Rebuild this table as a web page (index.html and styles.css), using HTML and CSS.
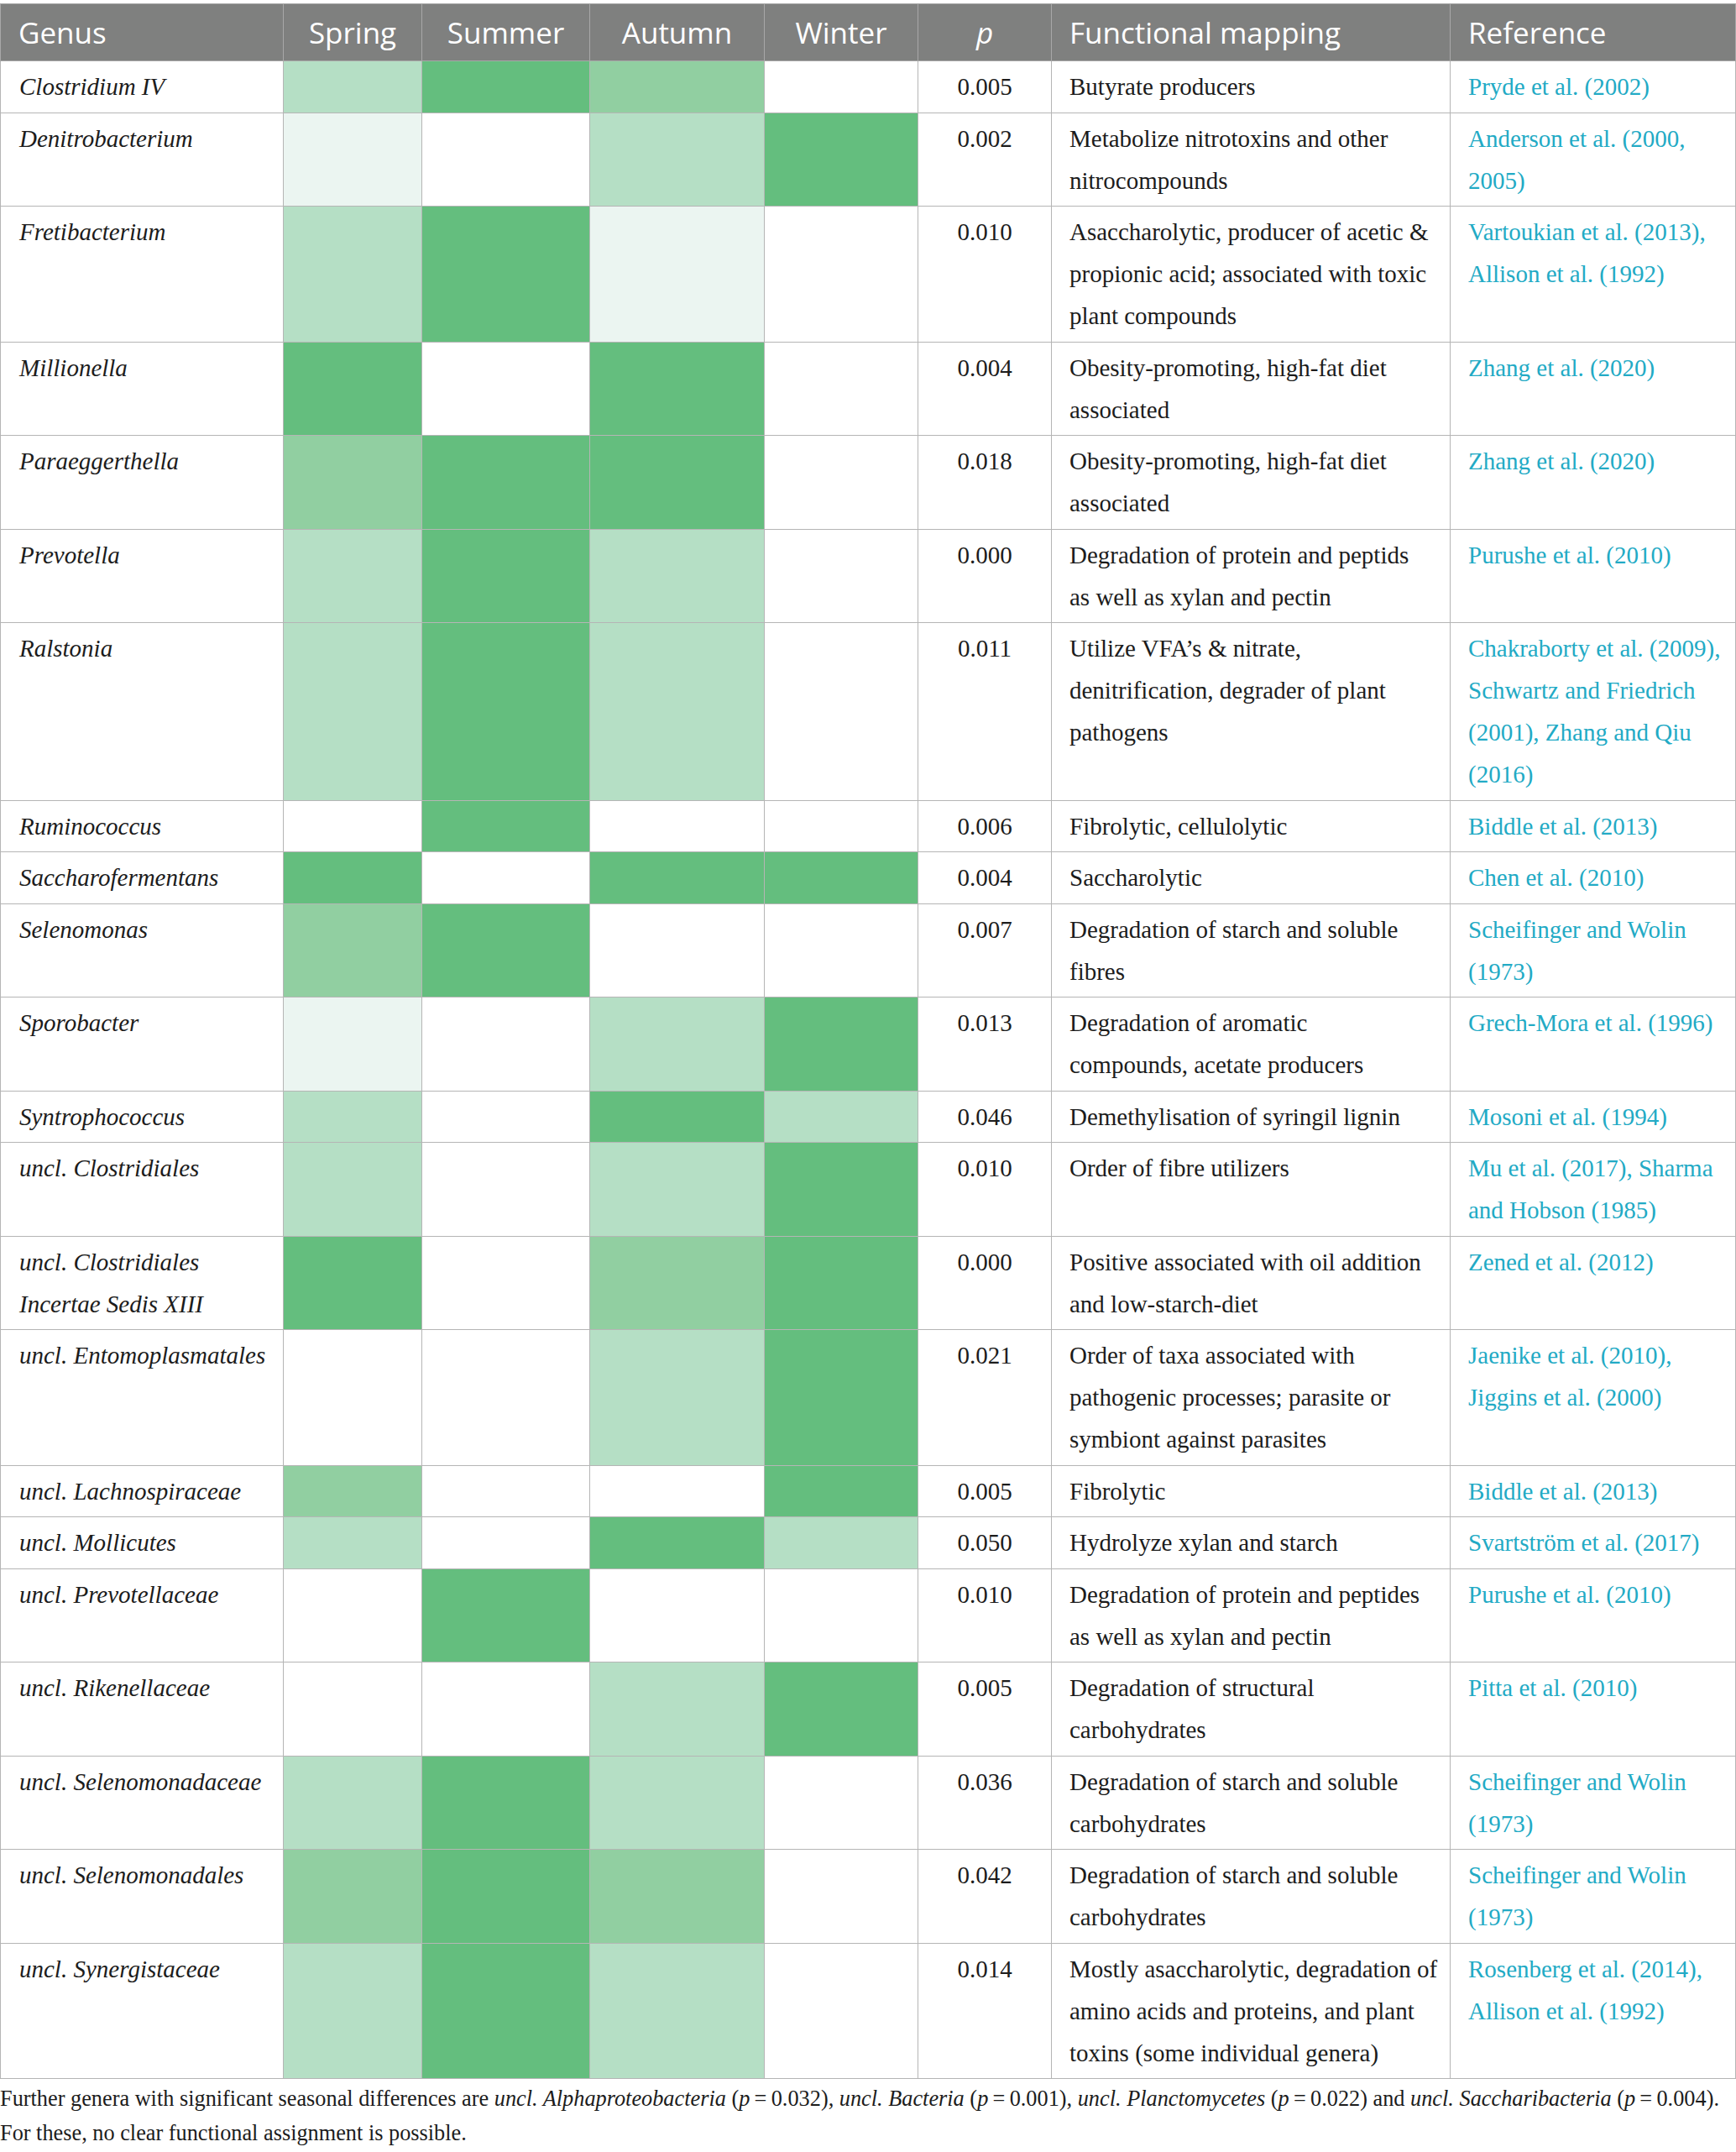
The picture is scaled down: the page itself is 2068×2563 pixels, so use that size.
FILE: index.html
```html
<!DOCTYPE html>
<html lang="en">
<head>
<meta charset="UTF-8">
<meta name="viewport" content="width=device-width, initial-scale=1.0">
<title>Seasonal genera</title>
<link rel="stylesheet" href="styles.css">
</head>
<body>

<div id="table-wrap">
<table id="genus-table">
  <colgroup>
    <col class="col-genus">
    <col class="col-season1">
    <col class="col-season2">
    <col class="col-season3">
    <col class="col-season4">
    <col class="col-p">
    <col class="col-func">
    <col class="col-ref">
  </colgroup>
  <tr>
    <th class="left">Genus</th>
    <th>Spring</th>
    <th>Summer</th>
    <th>Autumn</th>
    <th>Winter</th>
    <th><i>p</i></th>
    <th class="left">Functional mapping</th>
    <th class="left">Reference</th>
  </tr>
  <tr>
    <td class="genus">Clostridium IV</td>
    <td class="hm l"></td><td class="hm d"></td><td class="hm m"></td><td class="hm"></td>
    <td class="pval">0.005</td>
    <td>Butyrate producers</td>
    <td class="ref">Pryde et al. (2002)</td>
  </tr>
  <tr>
    <td class="genus">Denitrobacterium</td>
    <td class="hm v"></td><td class="hm"></td><td class="hm l"></td><td class="hm d"></td>
    <td class="pval">0.002</td>
    <td>Metabolize nitrotoxins and other<br>nitrocompounds</td>
    <td class="ref">Anderson et al. (2000,<br>2005)</td>
  </tr>
  <tr>
    <td class="genus">Fretibacterium</td>
    <td class="hm l"></td><td class="hm d"></td><td class="hm v"></td><td class="hm"></td>
    <td class="pval">0.010</td>
    <td>Asaccharolytic, producer of acetic &amp;<br>propionic acid; associated with toxic<br>plant compounds</td>
    <td class="ref">Vartoukian et al. (2013),<br>Allison et al. (1992)</td>
  </tr>
  <tr>
    <td class="genus">Millionella</td>
    <td class="hm d"></td><td class="hm"></td><td class="hm d"></td><td class="hm"></td>
    <td class="pval">0.004</td>
    <td>Obesity-promoting, high-fat diet<br>associated</td>
    <td class="ref">Zhang et al. (2020)</td>
  </tr>
  <tr>
    <td class="genus">Paraeggerthella</td>
    <td class="hm m"></td><td class="hm d"></td><td class="hm d"></td><td class="hm"></td>
    <td class="pval">0.018</td>
    <td>Obesity-promoting, high-fat diet<br>associated</td>
    <td class="ref">Zhang et al. (2020)</td>
  </tr>
  <tr>
    <td class="genus">Prevotella</td>
    <td class="hm l"></td><td class="hm d"></td><td class="hm l"></td><td class="hm"></td>
    <td class="pval">0.000</td>
    <td>Degradation of protein and peptids<br>as well as xylan and pectin</td>
    <td class="ref">Purushe et al. (2010)</td>
  </tr>
  <tr>
    <td class="genus">Ralstonia</td>
    <td class="hm l"></td><td class="hm d"></td><td class="hm l"></td><td class="hm"></td>
    <td class="pval">0.011</td>
    <td>Utilize VFA’s &amp; nitrate,<br>denitrification, degrader of plant<br>pathogens</td>
    <td class="ref">Chakraborty et al. (2009),<br>Schwartz and Friedrich<br>(2001), Zhang and Qiu<br>(2016)</td>
  </tr>
  <tr>
    <td class="genus">Ruminococcus</td>
    <td class="hm"></td><td class="hm d"></td><td class="hm"></td><td class="hm"></td>
    <td class="pval">0.006</td>
    <td>Fibrolytic, cellulolytic</td>
    <td class="ref">Biddle et al. (2013)</td>
  </tr>
  <tr>
    <td class="genus">Saccharofermentans</td>
    <td class="hm d"></td><td class="hm"></td><td class="hm d"></td><td class="hm d"></td>
    <td class="pval">0.004</td>
    <td>Saccharolytic</td>
    <td class="ref">Chen et al. (2010)</td>
  </tr>
  <tr>
    <td class="genus">Selenomonas</td>
    <td class="hm m"></td><td class="hm d"></td><td class="hm"></td><td class="hm"></td>
    <td class="pval">0.007</td>
    <td>Degradation of starch and soluble<br>fibres</td>
    <td class="ref">Scheifinger and Wolin<br>(1973)</td>
  </tr>
  <tr>
    <td class="genus">Sporobacter</td>
    <td class="hm v"></td><td class="hm"></td><td class="hm l"></td><td class="hm d"></td>
    <td class="pval">0.013</td>
    <td>Degradation of aromatic<br>compounds, acetate producers</td>
    <td class="ref">Grech-Mora et al. (1996)</td>
  </tr>
  <tr>
    <td class="genus">Syntrophococcus</td>
    <td class="hm l"></td><td class="hm"></td><td class="hm d"></td><td class="hm l"></td>
    <td class="pval">0.046</td>
    <td>Demethylisation of syringil lignin</td>
    <td class="ref">Mosoni et al. (1994)</td>
  </tr>
  <tr>
    <td class="genus">uncl. Clostridiales</td>
    <td class="hm l"></td><td class="hm"></td><td class="hm l"></td><td class="hm d"></td>
    <td class="pval">0.010</td>
    <td>Order of fibre utilizers</td>
    <td class="ref">Mu et al. (2017), Sharma<br>and Hobson (1985)</td>
  </tr>
  <tr>
    <td class="genus">uncl. Clostridiales<br>Incertae Sedis XIII</td>
    <td class="hm d"></td><td class="hm"></td><td class="hm m"></td><td class="hm d"></td>
    <td class="pval">0.000</td>
    <td>Positive associated with oil addition<br>and low-starch-diet</td>
    <td class="ref">Zened et al. (2012)</td>
  </tr>
  <tr>
    <td class="genus">uncl. Entomoplasmatales</td>
    <td class="hm"></td><td class="hm"></td><td class="hm l"></td><td class="hm d"></td>
    <td class="pval">0.021</td>
    <td>Order of taxa associated with<br>pathogenic processes; parasite or<br>symbiont against parasites</td>
    <td class="ref">Jaenike et al. (2010),<br>Jiggins et al. (2000)</td>
  </tr>
  <tr>
    <td class="genus">uncl. Lachnospiraceae</td>
    <td class="hm m"></td><td class="hm"></td><td class="hm"></td><td class="hm d"></td>
    <td class="pval">0.005</td>
    <td>Fibrolytic</td>
    <td class="ref">Biddle et al. (2013)</td>
  </tr>
  <tr>
    <td class="genus">uncl. Mollicutes</td>
    <td class="hm l"></td><td class="hm"></td><td class="hm d"></td><td class="hm l"></td>
    <td class="pval">0.050</td>
    <td>Hydrolyze xylan and starch</td>
    <td class="ref">Svartström et al. (2017)</td>
  </tr>
  <tr>
    <td class="genus">uncl. Prevotellaceae</td>
    <td class="hm"></td><td class="hm d"></td><td class="hm"></td><td class="hm"></td>
    <td class="pval">0.010</td>
    <td>Degradation of protein and peptides<br>as well as xylan and pectin</td>
    <td class="ref">Purushe et al. (2010)</td>
  </tr>
  <tr>
    <td class="genus">uncl. Rikenellaceae</td>
    <td class="hm"></td><td class="hm"></td><td class="hm l"></td><td class="hm d"></td>
    <td class="pval">0.005</td>
    <td>Degradation of structural<br>carbohydrates</td>
    <td class="ref">Pitta et al. (2010)</td>
  </tr>
  <tr>
    <td class="genus">uncl. Selenomonadaceae</td>
    <td class="hm l"></td><td class="hm d"></td><td class="hm l"></td><td class="hm"></td>
    <td class="pval">0.036</td>
    <td>Degradation of starch and soluble<br>carbohydrates</td>
    <td class="ref">Scheifinger and Wolin<br>(1973)</td>
  </tr>
  <tr>
    <td class="genus">uncl. Selenomonadales</td>
    <td class="hm m"></td><td class="hm d"></td><td class="hm m"></td><td class="hm"></td>
    <td class="pval">0.042</td>
    <td>Degradation of starch and soluble<br>carbohydrates</td>
    <td class="ref">Scheifinger and Wolin<br>(1973)</td>
  </tr>
  <tr>
    <td class="genus">uncl. Synergistaceae</td>
    <td class="hm l"></td><td class="hm d"></td><td class="hm l"></td><td class="hm"></td>
    <td class="pval">0.014</td>
    <td>Mostly asaccharolytic, degradation of<br>amino acids and proteins, and plant<br>toxins (some individual genera)</td>
    <td class="ref">Rosenberg et al. (2014),<br>Allison et al. (1992)</td>
  </tr>
</table>

<p class="table-note">Further genera with significant seasonal differences are <i>uncl. Alphaproteobacteria</i> (<i>p</i>&#8201;=&#8201;0.032), <i>uncl. Bacteria</i> (<i>p</i>&#8201;=&#8201;0.001), <i>uncl. Planctomycetes</i> (<i>p</i>&#8201;=&#8201;0.022) and <i>uncl. Saccharibacteria</i> (<i>p</i>&#8201;=&#8201;0.004).<br>For these, no clear functional assignment is possible.</p>
</div>

</body>
</html>
```

FILE: styles.css
```css
body {
    margin: 0;
    background-color: #fff;
    color: #1c1c1c;
    font-family: "Liberation Serif", "Times New Roman", serif;
}

#table-wrap {
    padding-top: 4px;
}

table {
    width: 2067px;
    border-collapse: collapse;
    table-layout: fixed;
}

.col-genus { width: 337px; }
.col-season1 { width: 165px; }
.col-season2 { width: 200px; }
.col-season3 { width: 208px; }
.col-season4 { width: 183px; }
.col-p { width: 159px; }
.col-func { width: 475px; }
.col-ref { width: 340px; }

th {
    background-color: #7f807f;
    color: #fff;
    font-family: "Open Sans", "Noto Sans", sans-serif;
    font-weight: normal;
    font-size: 35px;
    line-height: 50px;
    padding: 9px 21px 8px 21px;
    text-align: center;
    border: 1px solid #a8a8a8;
    white-space: nowrap;
}

th.left {
    text-align: left;
}

td {
    border: 1px solid #b5b5b5;
    font-size: 29px;
    line-height: 50px;
    padding: 5px 21px 5.5px 21px;
    vertical-align: top;
    text-align: left;
    white-space: nowrap;
}

td.genus {
    font-style: italic;
    padding-left: 22px;
}

td.pval {
    text-align: center;
}

td.ref {
    color: #22aac5;
}

/* heat map cells */
td.hm { padding: 0; }
td.hm.d { background-color: #64be7e; }
td.hm.m { background-color: #91cfa1; }
td.hm.l { background-color: #b5dfc5; }
td.hm.v { background-color: #ebf5f1; }

.table-note {
    margin: 3px 0 0 0;
    font-size: 26.3px;
    line-height: 41px;
    white-space: nowrap;
}
```
